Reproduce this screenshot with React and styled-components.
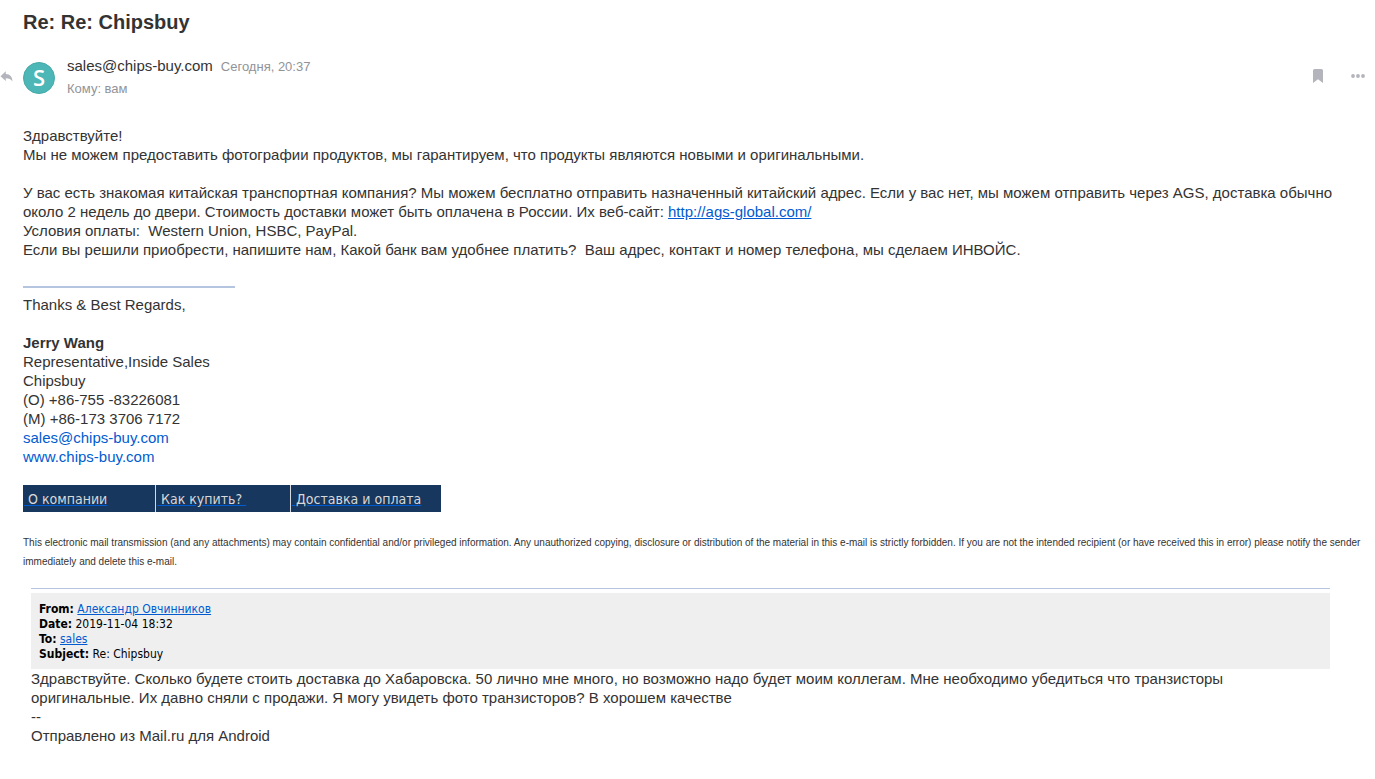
import React from "react";
import styled, { createGlobalStyle } from "styled-components";

const menu = [
  { label: "\u00a0О компании", width: 132 },
  { label: "\u00a0Как купить?\u00a0", width: 134 },
  { label: "\u00a0Доставка и оплата", width: 150 },
];

const App = () => {
  return (
    <Page>
      <GlobalStyle />
      <Subject>Re: Re: Chipsbuy</Subject>
      <Header>
        <ReplyButton aria-label="Ответить">
          <svg width="13" height="11" viewBox="0 0 13 11" fill="currentColor">
            <path d="M5.800 0.300v2.700c4.200.2 6.500 2.600 6.700 7.400C10.900 8.300 9 7.300 5.800 7.300v2.700L0.500 5.200z" />
          </svg>
        </ReplyButton>
        <Avatar>S</Avatar>
        <Sender>
          <SenderRow>
            <span>sales@chips-buy.com</span>
            <Meta>Сегодня, 20:37</Meta>
          </SenderRow>
          <Meta>Кому: вам</Meta>
        </Sender>
        <Actions>
          <IconButton aria-label="Пометить">
            <svg width="10" height="14" viewBox="0 0 10 14" fill="currentColor">
              <path d="M1.500 0h7Q10 0 10 1.500V14L5 10.200 0 14V1.500Q0 0 1.500 0z" />
            </svg>
          </IconButton>
          <IconButton aria-label="Ещё">
            <svg width="14" height="4" viewBox="0 0 14 4" fill="currentColor">
              <circle cx="2" cy="2" r="1.900" />
              <circle cx="7" cy="2" r="1.900" />
              <circle cx="12" cy="2" r="1.900" />
            </svg>
          </IconButton>
        </Actions>
      </Header>

      <Body>
        <Paragraph>
          Здравствуйте!
          <br />
          Мы не можем предоставить фотографии продуктов, мы гарантируем, что
          продукты являются новыми и оригинальными.
        </Paragraph>
        <Paragraph>
          У вас есть знакомая китайская транспортная компания? Мы можем
          бесплатно отправить назначенный китайский адрес. Если у вас нет, мы
          можем отправить через AGS, доставка обычно около 2 недель до двери.
          Стоимость доставки может быть оплачена в России. Их веб-сайт:{" "}
          <Link href="http://ags-global.com/" $underline>
            http://ags-global.com/
          </Link>
          <br />
          Условия оплаты:&nbsp; Western Union, HSBC, PayPal.
          <br />
          Если вы решили приобрести, напишите нам, Какой банк вам удобнее
          платить?&nbsp; Ваш адрес, контакт и номер телефона, мы сделаем ИНВОЙС.
        </Paragraph>

        <SignatureLine />
        <Paragraph>Thanks &amp; Best Regards,</Paragraph>
        <Paragraph>
          <b>Jerry Wang</b>
          <br />
          Representative,Inside Sales
          <br />
          Chipsbuy
          <br />
          (O) +86-755 -83226081
          <br />
          (M) +86-173 3706 7172
          <br />
          <Link href="mailto:sales@chips-buy.com">sales@chips-buy.com</Link>
          <br />
          <Link href="http://www.chips-buy.com">www.chips-buy.com</Link>
        </Paragraph>

        <Menu>
          {menu.map((item) => (
            <MenuItem key={item.label} $width={item.width}>
              <a href="#">{item.label}</a>
            </MenuItem>
          ))}
        </Menu>

        <Disclaimer>
          This electronic mail transmission (and any attachments) may contain
          confidential and/or privileged information. Any unauthorized copying,
          disclosure or distribution of the material in this e-mail is strictly
          forbidden. If you are not the intended recipient (or have received
          this in error) please notify the sender immediately and delete this
          e-mail.
        </Disclaimer>

        <Quote>
          <QuoteHeader>
            <div>
              <b>From:</b>{" "}
              <Link href="#" $underline>
                Александр Овчинников
              </Link>
            </div>
            <div>
              <b>Date:</b> 2019-11-04 18:32
            </div>
            <div>
              <b>To:</b>{" "}
              <Link href="#" $underline>
                sales
              </Link>
            </div>
            <div>
              <b>Subject:</b> Re: Chipsbuy
            </div>
          </QuoteHeader>
          <p>
            Здравствуйте. Сколько будете стоить доставка до Хабаровска. 50 лично
            мне много, но возможно надо будет моим коллегам. Мне необходимо
            убедиться что транзисторы оригинальные. Их давно сняли с продажи. Я
            могу увидеть фото транзисторов? В хорошем качестве
            <br />
            --
            <br />
            Отправлено из Mail.ru для Android
          </p>
        </Quote>
      </Body>
    </Page>
  );
};

const GlobalStyle = createGlobalStyle`
  * {
    box-sizing: border-box;
  }

  body {
    margin: 0;
    background: #fff;
    color: #333;
    font-family: "Liberation Sans", Arial, sans-serif;
    font-size: 15px;
    line-height: 19px;
  }

  p {
    margin: 0;
  }
`;

const Page = styled.main`
  padding: 8px 8px 32px 0;
`;

const Subject = styled.h1`
  margin: 0 0 0 23px;
  font-size: 20px;
  font-weight: 700;
  line-height: 28px;
`;

const Header = styled.header`
  display: flex;
  margin-top: 20px;
`;

const ReplyButton = styled.button`
  display: flex;
  width: 23px;
  height: 40px;
  padding: 0;
  align-items: center;
  border: none;
  background: none;
  color: #b4b5bc;
`;

const Avatar = styled.div`
  width: 32px;
  height: 32px;
  margin: 6px 12px 0 0;
  border: 1px solid #45aaa9;
  border-radius: 50%;
  background: #4db6b6;
  color: #fff;
  font-family: "Open Sans", sans-serif;
  font-size: 22px;
  font-weight: 600;
  line-height: 29px;
  text-align: center;
`;

const Sender = styled.div`
  display: flex;
  flex-direction: column;
  gap: 2px;
`;

const SenderRow = styled.div`
  display: flex;
  align-items: baseline;
  gap: 8px;
  line-height: 20px;
`;

const Meta = styled.span`
  color: #919399;
  font-size: 13px;
  line-height: 20px;
`;

const Actions = styled.div`
  display: flex;
  height: 40px;
  margin-left: auto;
  padding-right: 1px;
  gap: 24px;
`;

const IconButton = styled.button`
  display: flex;
  width: 16px;
  padding: 0;
  align-items: center;
  justify-content: center;
  border: none;
  background: none;
  color: #b4b5bc;
`;

const Body = styled.article`
  margin: 27px 0 0 23px;
`;

const Paragraph = styled.p`
  margin-bottom: 19px;
`;

const Link = styled.a`
  color: #005bd1;
  text-decoration: ${({ $underline }) => ($underline ? "underline" : "none")};
`;

const SignatureLine = styled.hr`
  width: 212px;
  height: 2px;
  margin: 27px 0 7px;
  border: none;
  background: #b5c4df;
`;

const Menu = styled.nav`
  display: flex;
  width: fit-content;
  gap: 1px;
  background: #d5dae0;
`;

const MenuItem = styled.div`
  width: ${({ $width }) => $width}px;
  padding: 5px 1px 3px;
  background: #17375e;
  font-family: "DejaVu Sans Condensed", "DejaVu Sans", sans-serif;
  font-size: 14px;
  white-space: nowrap;

  > a {
    color: #d8d8d8;
    text-decoration-color: #005bd1;
  }
`;

const Disclaimer = styled.p`
  margin-top: 21px;
  font-size: 10px;
`;

const Quote = styled.blockquote`
  margin: 17px 37px 0 8px;
  padding-top: 4px;
  border-top: 1px solid #b5c4df;
`;

const QuoteHeader = styled.div`
  padding: 9px 8px 7px;
  background: #efefef;
  color: #000;
  font-family: "DejaVu Sans Condensed", "DejaVu Sans", sans-serif;
  font-size: 12px;
  line-height: 15px;
`;

export default App;
